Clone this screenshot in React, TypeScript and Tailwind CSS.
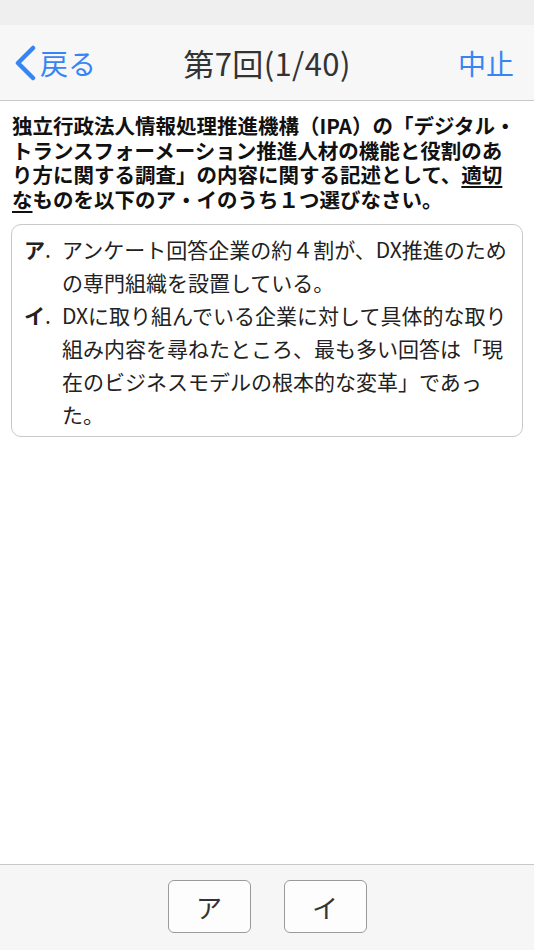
import React from 'react'

const font = { fontFamily: '"Noto Sans CJK JP", "Noto Sans", sans-serif' }

const choices = [
  { label: 'ア', text: 'アンケート回答企業の約４割が、DX推進のための専門組織を設置している。' },
  {
    label: 'イ',
    text: 'DXに取り組んでいる企業に対して具体的な取り組み内容を尋ねたところ、最も多い回答は「現在のビジネスモデルの根本的な変革」であった。',
  },
]

function ChevronLeft() {
  return (
    <svg width="22" height="36" viewBox="0 0 22 36" className="shrink-0">
      <path d="M19 3 L4 18 L19 33" fill="none" stroke="#3784f5" strokeWidth="4.5" strokeLinecap="round" strokeLinejoin="round" />
    </svg>
  )
}

export default function App() {
  return (
    <div className="flex h-screen flex-col bg-white text-[#111]" style={font}>
      {/* status bar */}
      <div className="h-[25px] bg-[#efefef]" />

      {/* nav bar */}
      <div className="grid h-[76px] grid-cols-[1fr_auto_1fr] items-center border-b border-[#c8c8c8] bg-[#f7f7f7] px-[14px]">
        <button className="flex items-center gap-[4px] text-[28px] leading-none text-[#3784f5]">
          <ChevronLeft />
          <span>戻る</span>
        </button>
        <h1 className="text-[31px] font-normal leading-none tracking-[0.4px] text-[#333]">第7回(1/40)</h1>
        <button className="justify-self-end pr-[6px] text-[28px] leading-none text-[#3784f5]">中止</button>
      </div>

      {/* question */}
      <div className="flex-1 overflow-hidden">
        <p className="px-[12px] pt-[12px] text-[20.5px] font-bold leading-[24.5px] text-[#111]">
          独立行政法人情報処理推進機構（IPA）の「デジタル・トランスフォーメーション推進人材の機能と役割のあり方に関する調査」の内容に関する記述として、
          <span className="underline decoration-[1.5px] underline-offset-[3px]">適切な</span>
          ものを以下のア・イのうち１つ選びなさい。
        </p>

        <div className="mx-[11px] mt-[13px] flex flex-col rounded-[10px] border border-[#c9c9c9] pb-[5px] pl-[12px] pr-[10px] pt-[8px]">
          {choices.map((c) => (
            <div key={c.label} className="flex text-[21px] leading-[33px] text-[#222]">
              <span className="w-[38px] shrink-0 font-bold">
                {c.label}
                <span className="font-normal">.</span>
              </span>
              <span className="flex-1">{c.text}</span>
            </div>
          ))}
        </div>
      </div>

      {/* answer bar */}
      <div className="flex h-[86px] justify-center gap-[33px] border-t border-[#c8c8c8] bg-[#f6f6f6] pt-[15px]">
        {choices.map((c) => (
          <button
            key={c.label}
            className="h-[53px] w-[83px] rounded-[6px] border-[1.5px] border-[#9a9a9a] bg-[#fdfdfd] text-[26px] text-[#333]"
          >
            {c.label}
          </button>
        ))}
      </div>
    </div>
  )
}
